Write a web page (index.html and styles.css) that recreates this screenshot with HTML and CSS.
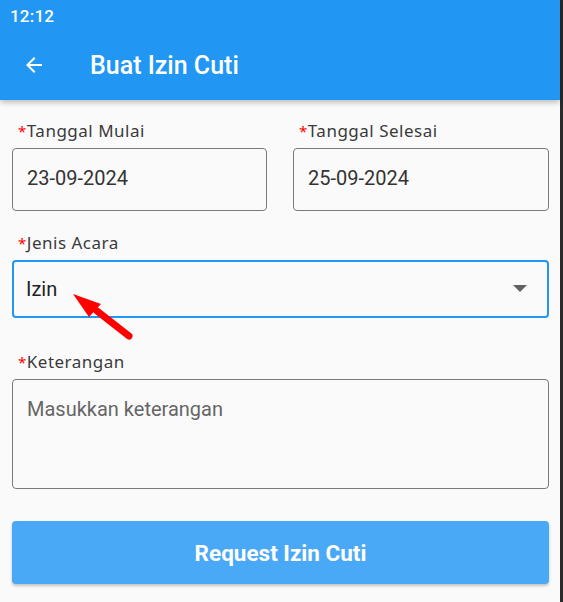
FILE: index.html
```html
<!DOCTYPE html>
<html lang="id">
<head>
<meta charset="utf-8">
<title>Buat Izin Cuti</title>
<link rel="stylesheet" href="styles.css">
</head>
<body>
<div class="screen">
  <div class="main">
    <header class="appbar">
      <div class="status">12:12</div>
      <div class="toolbar">
        <svg class="back" width="24" height="24" viewBox="0 0 24 24"><path d="M20 11H7.83l5.59-5.59L12 4l-8 8 8 8 1.41-1.41L7.83 13H20v-2z" fill="#fff"/></svg>
        <h1 class="title">Buat Izin Cuti</h1>
      </div>
    </header>
    <main class="form">
      <div class="row">
        <div class="field">
          <label class="label"><span class="req">*</span>Tanggal Mulai</label>
          <div class="box date">23-09-2024</div>
        </div>
        <div class="field">
          <label class="label"><span class="req">*</span>Tanggal Selesai</label>
          <div class="box date">25-09-2024</div>
        </div>
      </div>
      <div class="field gap-a">
        <label class="label"><span class="req">*</span>Jenis Acara</label>
        <div class="box select">
          <span>Izin</span>
          <svg class="caret" width="14" height="8" viewBox="0 0 14 8"><path d="M0 0h14L7 7z" fill="#616161"/></svg>
          <svg class="pointer" width="70" height="50" viewBox="0 0 70 50"><path d="M56 43 L24 18" stroke="#f00" stroke-width="7" stroke-linecap="round"/><path d="M0 1 L28 11 L16 24 z" fill="#f00"/></svg>
        </div>
      </div>
      <div class="field gap-b">
        <label class="label"><span class="req">*</span>Keterangan</label>
        <div class="box area">Masukkan keterangan</div>
      </div>
      <button class="submit">Request Izin Cuti</button>
    </main>
  </div>
  <div class="edge"></div>
</div>
</body>
</html>
```
FILE: styles.css
```css
* { box-sizing: border-box; }
html, body { margin: 0; padding: 0; }
body { background: #fafafa; font-family: Roboto, "Liberation Sans", sans-serif; }
.screen { display: flex; width: 563px; height: 602px; overflow: hidden; }
.main { width: 560px; background: #fafafa; }
.edge { width: 3px; background: #2b2b2b; }
.appbar { background: #2196f3; height: 100px; color: #fff; box-shadow: 0 2px 6px rgba(0,0,0,0.28); position: relative; z-index: 1; }
.status { height: 32px; padding: 6px 0 0 10px; font-size: 17px; font-weight: 500; letter-spacing: 0.2px; }
.toolbar { display: flex; align-items: center; height: 68px; padding: 0 0 0 22px; }
.back { display: block; margin-top: -2px; }
.title { margin: -1px 0 0 44px; font-size: 25px; font-weight: 500; }
.form { padding: 21px 11px 0 12px; }
.row { display: grid; grid-template-columns: 255px 256px; column-gap: 26px; }
.field { display: flex; flex-direction: column; }
.label { display: block; height: 20px; line-height: 20px; font-family: "Noto Sans", sans-serif; font-size: 17px; letter-spacing: 0.5px; color: #3a3a3a; padding-left: 6px; margin-bottom: 7px; }
.req { color: #f00; font-size: 15px; }
.box { border: 1px solid #7a7a7a; border-radius: 4px; background: #fafafa; font-size: 20px; color: #333; }
.date { height: 63px; display: flex; align-items: center; padding: 0 14px 3px; }
.gap-a { margin-top: 22px; }
.select { height: 58px; border: 2px solid #2196f3; display: flex; align-items: center; justify-content: space-between; padding: 0 20px 0 12px; position: relative; color: #222; }
.caret { display: block; margin-top: -1px; }
.pointer { position: absolute; left: 59px; top: 31px; }
.gap-b { margin-top: 34px; }
.area { height: 110px; padding: 17px 14px; color: #666; }
.submit { display: block; width: 537px; height: 63px; margin-top: 32px; border: none; border-radius: 4px; background: #4aa9f7; color: #fff; font-family: Roboto, sans-serif; font-size: 22.5px; font-weight: 700; box-shadow: 0 2px 3px rgba(0,0,0,0.22); }
```
